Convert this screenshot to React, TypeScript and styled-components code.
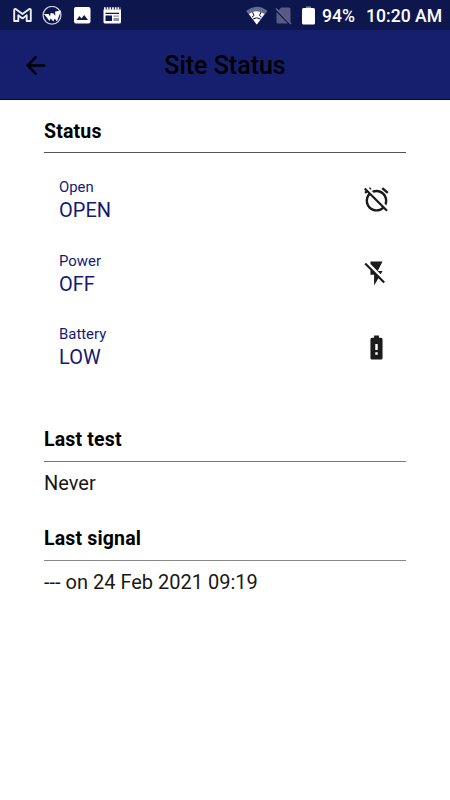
import React from "react";
import styled, { createGlobalStyle } from "styled-components";

const GlobalStyle = createGlobalStyle`
  * { box-sizing: border-box; }
  body { margin: 0; background: #fff; font-family: Roboto, sans-serif; color: #000; }
`;

const Screen = styled.div`
  width: 450px;
  height: 800px;
  overflow: hidden;
  background: #fff;
`;

const StatusBar = styled.div`
  height: 30px;
  padding: 1px 8px 0 13px;
  display: flex;
  align-items: center;
  justify-content: space-between;
  background: #0e164e;
  color: #fff;
`;

const Notifications = styled.div`
  display: flex;
  align-items: center;
  gap: 10px;
`;

const SystemInfo = styled.div`
  display: flex;
  align-items: center;
`;

const Glyph = styled.svg<{ $gap?: number }>`
  display: block;
  flex: none;
  margin-right: ${(p) => p.$gap ?? 0}px;
`;

const BarText = styled.span<{ $width: number; $gap?: number }>`
  width: ${(p) => p.$width}px;
  margin-right: ${(p) => p.$gap ?? 0}px;
  font-size: 17.6px;
  line-height: 30px;
  font-weight: 500;
  white-space: nowrap;
`;

const Header = styled.header`
  height: 70px;
  display: grid;
  grid-template-columns: 70px 1fr 70px;
  align-items: center;
  background: #151f6d;
  border-bottom: 1px solid #05064f;
`;

const BackButton = styled.button`
  width: 70px;
  height: 69px;
  padding: 1px 0 0;
  border: 0;
  background: none;
  display: flex;
  align-items: center;
  justify-content: center;
`;

const Title = styled.h1`
  margin: 2px 0 0;
  text-align: center;
  font-size: 25px;
  line-height: 30px;
  font-weight: 500;
`;

const Content = styled.main`
  padding: 17px 44px 0;
`;

const Section = styled.section<{ $height: number }>`
  height: ${(p) => p.$height}px;
`;

const SectionTitle = styled.h2<{ $line: string; $shift?: number }>`
  margin: 0;
  height: 36px;
  padding-top: ${(p) => p.$shift ?? 0}px;
  border-bottom: 1px solid ${(p) => p.$line};
  font-size: 19.5px;
  line-height: 28px;
  letter-spacing: 0.17px;
  font-weight: 700;
`;

const StatusList = styled.div`
  padding: 10px 15.5px 0 15px;
`;

const StatusRow = styled.div`
  height: 73.7px;
  display: flex;
  align-items: center;
  justify-content: space-between;
  color: #141a74;
`;

const Label = styled.div`
  font-size: 14.9px;
  line-height: 20px;
`;

const Value = styled.div`
  font-size: 20px;
  line-height: 26px;
`;

const Detail = styled.p`
  margin: 7px 0 0;
  font-size: 20px;
  line-height: 28px;
  color: #181818;
`;

const statuses = [
  {
    label: "Open",
    value: "OPEN",
    icon: "M12 6c3.87 0 7 3.13 7 7 0 .84-.16 1.65-.43 2.4l1.52 1.52c.58-1.19.91-2.51.91-3.92 0-4.97-4.03-9-9-9-1.41 0-2.73.33-3.92.91L9.6 6.43C10.35 6.16 11.16 6 12 6zm10-.28l-4.6-3.86-1.29 1.53 4.6 3.86L22 5.72zM2.92 2.29L1.65 3.57 2.98 4.9l-1.11.93 1.42 1.42 1.11-.94.8.8C3.83 8.69 3 10.75 3 13c0 4.97 4.02 9 9 9 2.25 0 4.31-.83 5.89-2.2l2.2 2.2 1.27-1.27L3.89 3.27l-.97-.98zm13.55 16.1C15.26 19.39 13.7 20 12 20c-3.87 0-7-3.13-7-7 0-1.7.61-3.26 1.61-4.47l9.86 9.86zM8.02 3.28L6.6 1.86l-.86.71 1.42 1.42.86-.71z",
  },
  {
    label: "Power",
    value: "OFF",
    icon: "M3.27 3L2 4.27l5 5V13h3v9l3.58-6.14L17.73 20 19 18.73 3.27 3zM17 10h-4l4-8H7v2.18l8.46 8.46L17 10z",
  },
  {
    label: "Battery",
    value: "LOW",
    icon: "M15.67 4H14V2h-4v2H8.33C7.6 4 7 4.6 7 5.33v15.33C7 21.4 7.6 22 8.33 22h7.33c.74 0 1.34-.6 1.34-1.33V5.33C17 4.6 16.4 4 15.67 4zM13 18h-2v-2h2v2zm0-4h-2V9h2v5z",
  },
];

export default function App() {
  return (
    <Screen>
      <GlobalStyle />
      <StatusBar>
        <Notifications>
          <Glyph width="19" height="20" viewBox="0 0 19 20">
            <path d="M1.200 15V4.200Q1.200 2.500 3 3.200L9.500 8 16 3.200Q17.800 2.500 17.800 4.200V15H13.700V9.300L9.500 12.400 5.300 9.300V15Z" fill="none" stroke="#eceef6" strokeWidth="1.900" strokeLinejoin="round" />
          </Glyph>
          <Glyph width="20" height="20" viewBox="0 0 20 20">
            <circle cx="10" cy="9.300" r="8.900" fill="none" stroke="#c9cce0" strokeWidth="1.300" />
            <path d="M2 8H6.500L8.300 10.500V7.300H11.500L13.200 10V5.500L19 4.500 15 15.500 12.700 12.500 11.300 15.500 8.800 12.500 7.500 15Z" fill="#fff" />
          </Glyph>
          <Glyph width="20" height="20" viewBox="0 0 20 20">
            <path fillRule="evenodd" d="M4 1h12.500q2 0 2 2v12.500q0 2-2 2H4q-2 0-2-2V3q0-2 2-2ZM4.500 14h11.500l-3.800-5-2.700 3.500-2-2.400Z" fill="#fff" />
          </Glyph>
          <Glyph width="20" height="20" viewBox="0 0 20 20">
            <path d="M1.500 3.500h17.500V16q0 1.500-1.500 1.500H3Q1.500 17.500 1.500 16Z" fill="#fff" />
            <path d="M2 2.500h16.500" stroke="#fff" strokeWidth="2.500" strokeDasharray="1.700 1" />
            <path d="M3.500 6.700h13.500v1.300H3.500ZM3.500 9.500H10v5.500H3.500Z" fill="#0e164e" />
            <path d="M11.500 9.500H17v1.300h-5.500ZM11.500 12H17v3h-5.500Z" fill="#8d92b3" />
          </Glyph>
        </Notifications>
        <SystemInfo>
          <Glyph width="22" height="20" viewBox="0 0 22 20" $gap={7}>
            <path d="M0 5Q11-3.500 21.500 5L11 18.500Z" fill="#656a91" />
            <path d="M2.800 8Q11 2.500 18.500 8L10.700 18.500Z" fill="#fff" />
            <path d="M6.500 6 8 9.500 6 11M15 6l-1.500 3.500 2 1.500M7 13q3.500-2.500 7.500 0" fill="none" stroke="#0e164e" strokeWidth="1" />
          </Glyph>
          <Glyph width="17" height="20" viewBox="0 0 17 20" $gap={10}>
            <path d="M6 1.500h8q1.500 0 1.500 1.500v13.500L3.500 4.500ZM1.500 6 13 17.500H3q-1.500 0-1.500-1.500Z" fill="#565b84" />
            <path d="M1 2.500 16 18" stroke="#656a91" strokeWidth="1.500" />
          </Glyph>
          <Glyph width="13" height="20" viewBox="0 0 13 20" $gap={7}>
            <path d="M4 .5h5v2H4Z" fill="#858aa9" />
            <path d="M1.500 2h10Q13 2 13 3.500V17q0 1.500-1.500 1.500h-10Q0 18.500 0 17V3.500Q0 2 1.500 2Z" fill="#fff" />
          </Glyph>
          <BarText $width={33} $gap={11}>94%</BarText>
          <BarText $width={76}>10:20 AM</BarText>
        </SystemInfo>
      </StatusBar>
      <Header>
        <BackButton aria-label="Back">
          <Glyph width="29" height="29" viewBox="0 0 24 24">
            <path d="M20 11H7.830l5.590-5.590L12 4l-8 8 8 8 1.410-1.410L7.830 13H20v-2z" />
          </Glyph>
        </BackButton>
        <Title>Site Status</Title>
      </Header>
      <Content>
        <Section $height={309}>
          <SectionTitle $line="#555" $shift={1}>Status</SectionTitle>
          <StatusList>
            {statuses.map((s) => (
              <StatusRow key={s.label}>
                <div>
                  <Label>{s.label}</Label>
                  <Value>{s.value}</Value>
                </div>
                <Glyph width="29" height="29" viewBox="0 0 24 24">
                  <path d={s.icon} fill="#1b1b1b" />
                </Glyph>
              </StatusRow>
            ))}
          </StatusList>
        </Section>
        <Section $height={98.5}>
          <SectionTitle $line="#777">Last test</SectionTitle>
          <Detail>Never</Detail>
        </Section>
        <Section $height={99}>
          <SectionTitle $line="#888">Last signal</SectionTitle>
          <Detail>--- on 24 Feb 2021 09:19</Detail>
        </Section>
      </Content>
    </Screen>
  );
}
